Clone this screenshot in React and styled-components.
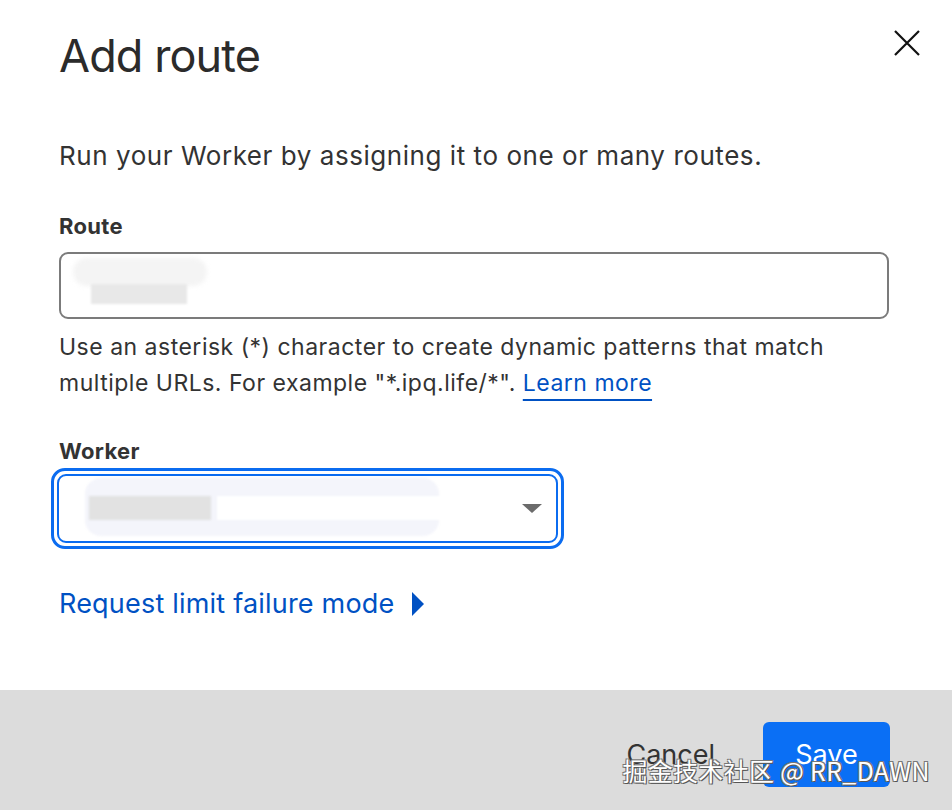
import React from "react";
import styled, { createGlobalStyle } from "styled-components";

const GlobalStyle = createGlobalStyle`
  html, body { margin: 0; padding: 0; background: #fff; }
  body { font-family: Inter, "Noto Sans", "Liberation Sans", sans-serif; color: #313131; }
`;

const Dialog = styled.div`
  width: 952px;
  height: 810px;
  display: flex;
  flex-direction: column;
  position: relative;
  overflow: hidden;
  background: #fff;
`;

const Body = styled.div`
  flex: 1;
  padding: 24px 63px 0 59px;
`;

const Header = styled.div`
  display: flex;
  justify-content: space-between;
  align-items: flex-start;
`;

const Title = styled.h1`
  margin: 0;
  font-size: 45px;
  font-weight: 400;
  color: #2b2b2b;
  letter-spacing: -0.9px;
  line-height: 64px;
`;

const CloseButton = styled.button`
  border: none;
  background: none;
  padding: 0;
  margin-top: 4px;
  margin-right: -33px;
  width: 30px;
  height: 30px;
  cursor: pointer;
`;

const Description = styled.p`
  margin: 50px 0 0;
  font-size: 26px;
  line-height: 36px;
  letter-spacing: 0.55px;
  color: #333;
`;

const Label = styled.div`
  margin-top: ${(p) => p.$top}px;
  font-size: 22px;
  font-weight: 700;
  letter-spacing: 0.3px;
  color: #333;
  line-height: 32px;
`;

const TextBox = styled.div`
  margin-top: 10px;
  height: 63px;
  border: 2px solid #7b7b7b;
  border-radius: 9px;
  position: relative;
`;

const Helper = styled.p`
  margin: 10px 0 0;
  font-size: 23px;
  line-height: 36px;
  letter-spacing: 0.5px;
  color: #333;
`;

const Link = styled.a`
  color: #0051c3;
  text-decoration: underline;
  text-decoration-thickness: 2px;
  text-underline-offset: 8px;
`;

const SelectRing = styled.div`
  margin-top: 1px;
  margin-left: -8px;
  width: 513px;
  height: 81px;
  box-sizing: border-box;
  border: 3px solid #0b6cf0;
  border-radius: 14px;
  padding: 3px;
`;

const Select = styled.div`
  height: 100%;
  box-sizing: border-box;
  border: 2px solid #0b6cf0;
  border-radius: 9px;
  display: flex;
  align-items: center;
  padding: 0 14px 0 20px;
  position: relative;
`;

const BlurBand = styled.div`
  position: absolute;
  border-radius: ${(p) => p.$r || 0}px;
  background: ${(p) => p.$bg};
  left: ${(p) => p.$x}px;
  top: ${(p) => p.$y}px;
  width: ${(p) => p.$w}px;
  height: ${(p) => p.$h}px;
  filter: blur(${(p) => p.$blur || 0}px);
`;

const Caret = styled.div`
  margin-left: auto;
  width: 0;
  height: 0;
  border-left: 10px solid transparent;
  border-right: 10px solid transparent;
  border-top: 9px solid #6b6b6b;
`;

const Expand = styled.div`
  margin-top: 35px;
  display: flex;
  align-items: center;
  gap: 17px;
  color: #0051c3;
  font-size: 27px;
  letter-spacing: 0.2px;
  line-height: 40px;
`;

const Footer = styled.div`
  height: 120px;
  background: #dcdcdc;
  display: flex;
  justify-content: flex-end;
  align-items: flex-start;
  gap: 48px;
  padding: 32px 62px 0 0;
  box-sizing: border-box;
`;

const TextButton = styled.button`
  border: none;
  background: none;
  font-family: inherit;
  font-size: 27px;
  color: #333;
  padding: 0;
  height: 65px;
`;

const PrimaryButton = styled.button`
  border: none;
  background: #0a6ff5;
  color: #fff;
  font-family: inherit;
  font-size: 27px;
  border-radius: 6px;
  width: 127px;
  height: 65px;
`;

const Watermark = styled.div`
  position: absolute;
  right: 22px;
  bottom: 22px;
  font-family: "Noto Sans CJK SC", "Noto Sans", sans-serif;
  font-size: 25px;
  color: #fff;
  text-shadow: 1px 1px 0 #555, -1px -1px 0 #777, 1px -1px 0 #777, -1px 1px 0 #777;
  letter-spacing: 0.3px;
`;

export default function App() {
  return (
    <>
      <GlobalStyle />
      <Dialog>
        <Body>
          <Header>
            <Title>Add route</Title>
            <CloseButton aria-label="Close">
              <svg width="30" height="30" viewBox="0 0 30 30">
                <path d="M3 3 L27 27 M27 3 L3 27" stroke="#111" strokeWidth="2.2" fill="none" />
              </svg>
            </CloseButton>
          </Header>
          <Description>Run your Worker by assigning it to one or many routes.</Description>
          <Label $top={36}>Route</Label>
          <TextBox>
            <BlurBand $x={12} $y={4} $w={134} $h={28} $r={14} $bg="#f4f4f4" $blur={2} />
            <BlurBand $x={30} $y={30} $w={96} $h={20} $bg="#e8e8e8" $blur={1} />
          </TextBox>
          <Helper>
            Use an asterisk (*) character to create dynamic patterns that match
            multiple URLs. For example "*.ipq.life/*". <Link href="#">Learn more</Link>
          </Helper>
          <Label $top={34}>Worker</Label>
          <SelectRing>
            <Select>
              <BlurBand $x={26} $y={2} $w={354} $h={58} $r={16} $bg="#f4f5fb" $blur={1} />
              <BlurBand $x={30} $y={20} $w={122} $h={24} $bg="#e2e2e2" $blur={1} />
              <BlurBand $x={158} $y={20} $w={260} $h={24} $bg="#fff" $blur={1} />
              <Caret />
            </Select>
          </SelectRing>
          <Expand>
            Request limit failure mode
            <svg width="14" height="26" viewBox="0 0 14 26">
              <path d="M1 1 L13 13 L1 25 Z" fill="#0051c3" />
            </svg>
          </Expand>
        </Body>
        <Footer>
          <TextButton>Cancel</TextButton>
          <PrimaryButton>Save</PrimaryButton>
        </Footer>
        <Watermark>掘金技术社区 @ RR_DAWN</Watermark>
      </Dialog>
    </>
  );
}
